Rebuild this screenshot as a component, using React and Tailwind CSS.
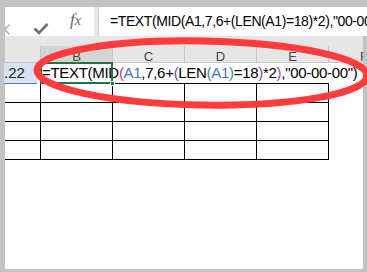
import React from "react";

const formula = '=TEXT(MID(A1,7,6+(LEN(A1)=18)*2),"00-00-00")';

function ColoredFormula() {
  // Excel-style reference & bracket colouring while editing
  return (
    <>
      <span>=TEXT(MID</span>
      <span className="text-[#c4359b]">(</span>
      <span className="text-[#3f74cc]">A1</span>
      <span>,7,6+</span>
      <span className="text-[#7b3fb5]">(</span>
      <span>LEN</span>
      <span className="text-[#1a9a6a]">(</span>
      <span className="text-[#3f74cc]">A1</span>
      <span className="text-[#1a9a6a]">)</span>
      <span>=18</span>
      <span className="text-[#7b3fb5]">)</span>
      <span>*2</span>
      <span className="text-[#c4359b]">)</span>
      <span>,"00-00-00")</span>
    </>
  );
}

function HeaderCell({ label, width, active }) {
  return (
    <div
      className={`${width} h-full border-r border-[#c6c6c6] flex justify-center pt-[4px] text-[13px] leading-[13px] text-[#444] ${
        active ? "bg-[#d4d4d4]" : ""
      }`}
    >
      {label}
    </div>
  );
}

function GridRow() {
  return (
    <div className="flex h-[19px]">
      <div className="w-[36px] border-r border-b border-black" />
      <div className="w-[72px] border-r border-b border-black" />
      <div className="w-[72px] border-r border-b border-black" />
      <div className="w-[72px] border-r border-b border-black" />
      <div className="w-[72px] border-r border-b border-black" />
    </div>
  );
}

export default function App() {
  return (
    <div className="relative w-[367px] h-[272px] overflow-hidden bg-[#c3c3c3] pl-[5px] pt-[7px] pb-[3px] font-['Liberation_Sans',Arial,sans-serif]">
      <div className="h-full flex flex-col">
        {/* Formula bar */}
        <div className="flex h-[29px] bg-[#e6e6e6] shrink-0">
          <div className="relative w-[89px] h-full bg-white overflow-hidden">
            <svg className="absolute left-[-6px] top-[17px]" width="11" height="11" viewBox="0 0 11 11">
              <path d="M0.5 0.5 L10.5 10.5 M10.5 0.5 L0.5 10.5" stroke="#a6a6a6" strokeWidth="1.3" fill="none" />
            </svg>
            <svg className="absolute left-[28px] top-[15px]" width="16" height="14" viewBox="0 0 16 14">
              <path d="M1.5 6.5 L6 11 L14.5 2" stroke="#6e6e6e" strokeWidth="2.6" fill="none" />
            </svg>
            <span className="absolute left-[65px] top-[4px] font-['Liberation_Serif',serif] italic text-[17px] text-[#666] leading-none">
              f<span className="text-[14px]">x</span>
            </span>
          </div>
          <div className="w-[4px]" />
          <div className="flex-1 h-full bg-white border-l border-[#cfcfcf] pl-[11px] flex items-center overflow-hidden whitespace-nowrap text-[14px] tracking-[-0.4px] text-black">
            {formula}
          </div>
        </div>

        {/* Sheet area */}
        <div className="flex-1 flex flex-col bg-white border-r-[4px] border-[#c3c3c3]">
          <div className="h-[10px] bg-[#e6e6e6] shrink-0" />

          {/* Column headers */}
          <div className="flex h-[17px] bg-[#e6e6e6] border-b border-[#c6c6c6] shrink-0">
            <HeaderCell label="" width="w-[36px]" />
            <HeaderCell label="B" width="w-[72px]" active />
            <HeaderCell label="C" width="w-[72px]" />
            <HeaderCell label="D" width="w-[72px]" />
            <HeaderCell label="E" width="w-[72px]" />
            <div className="flex-1 h-full overflow-hidden pl-[31px] pt-[4px] text-[13px] leading-[13px] text-[#444]">F</div>
          </div>

          {/* Row 1 */}
          <div className="relative flex h-[21px] shrink-0">
            <div className="w-[33px] h-full bg-[#d7e3f4] border-b border-[#4f81bd] overflow-hidden text-[15px] leading-[20px] text-[#222] -ml-[1px]">
              .22
            </div>
            <div className="w-[3px]" />
            <div className="w-[289px] h-full border-b border-black pl-[2px] whitespace-nowrap text-[15px] leading-[20px] tracking-[-0.3px] text-black">
              <ColoredFormula />
            </div>
            {/* active cell selection */}
            <div className="absolute left-[35px] top-[-1px] w-[73px] h-[22px] border-2 border-[#217346]" />
            <div className="absolute left-[105px] top-[18px] w-[5px] h-[5px] bg-[#217346] border border-white" />
          </div>

          <GridRow />
          <GridRow />
          <GridRow />
          <GridRow />
        </div>
      </div>

      {/* red annotation ellipse */}
      <svg className="absolute inset-0 pointer-events-none" width="367" height="272" viewBox="0 0 367 272">
        <ellipse cx="202" cy="73" rx="165" ry="32" transform="rotate(1 202 73)" fill="none" stroke="#ff3b3b" strokeWidth="7" />
      </svg>
    </div>
  );
}
